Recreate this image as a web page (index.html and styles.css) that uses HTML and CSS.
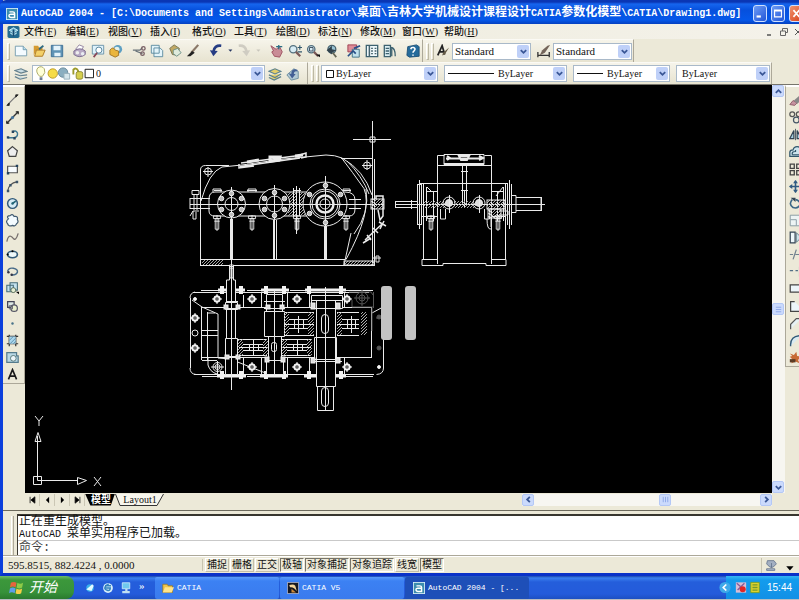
FILE: index.html
```html
<!DOCTYPE html>
<html lang="zh-CN">
<head>
<meta charset="utf-8">
<title>AutoCAD 2004</title>
<link rel="stylesheet" href="styles.css">
</head>
<body>
<svg class="defs" aria-hidden="true">
  <defs>
    <symbol id="chev" viewBox="0 0 10 10"><path d="M2 3.5 5 6.5 8 3.5" fill="none" stroke="#3a5796" stroke-width="2"/></symbol>
    <symbol id="acad" viewBox="0 0 14 14"><rect x=".5" y=".5" width="13" height="13" fill="#3c8dae" stroke="#d9f1f5"/><path d="M4 4.5h4q2 0 2 2V11H6q-2.500 0-2.500-2T6 7.200h4" fill="none" stroke="#fff" stroke-width="1.700"/></symbol>
    <symbol id="mag" viewBox="0 0 16 16"><circle cx="6" cy="6" r="4.200" fill="#d8ecf4" stroke="#54707e" stroke-width="1.500"/><path d="m9 9 5 5" stroke="#7c5a58" stroke-width="2.500"/></symbol>
    <symbol id="bolt" viewBox="0 0 8 8"><circle cx="4" cy="4" r="2.600" fill="#bbb" stroke="#fff"/></symbol>
  </defs>
</svg>

<div class="window">
  <header class="titlebar">
    <svg class="app-icon"><use href="#acad"/></svg>
    <h1><span>AutoCAD 2004 - [C:\Documents and Settings\Administrator\</span>桌面<span>\</span>吉林大学机械设计课程设计<span>CATIA</span>参数化模型<span>\CATIA\Drawing1.dwg]</span></h1>
    <div class="caption-buttons">
      <button aria-label="最小化"><svg viewBox="0 0 14 16"><path d="M3 11.500h5" stroke="#fff" stroke-width="2.500"/></svg></button>
      <button aria-label="最大化"><svg viewBox="0 0 14 16"><path d="M3 4h8v8H3zM3 5h8" fill="none" stroke="#fff" stroke-width="1.300"/></svg></button>
      <button class="close" aria-label="关闭"><svg viewBox="0 0 14 16"><path d="m4 4 7 8M11 4l-7 8" stroke="#fff" stroke-width="2"/></svg></button>
    </div>
  </header>

  <nav class="menubar">
    <svg class="menu-icon" viewBox="0 0 14 14"><rect width="14" height="14" rx="2" fill="#236b91"/><path d="m2 5 5-3 5 3-5 3zM3 8l4 3 4-3" fill="#7fc4dc" stroke="#d9f2fa"/><path d="M7 4v8" stroke="#164b72" stroke-width="2"/></svg>
    <button>文件(<u>F</u>)</button><button>编辑(<u>E</u>)</button><button>视图(<u>V</u>)</button><button>插入(<u>I</u>)</button><button>格式(<u>O</u>)</button><button>工具(<u>T</u>)</button><button>绘图(<u>D</u>)</button><button>标注(<u>N</u>)</button><button>修改(<u>M</u>)</button><button>窗口(<u>W</u>)</button><button>帮助(<u>H</u>)</button>
    <div class="doc-buttons">
      <button aria-label="最小化文档"><svg viewBox="0 0 10 10"><path d="M2 8h4" stroke="#555" stroke-width="1.500"/></svg></button>
      <button aria-label="还原文档"><svg viewBox="0 0 10 10"><path d="M3.500 4V1.500h5v4H7M1.500 4h5v4.500h-5z" fill="none" stroke="#666"/></svg></button>
      <button aria-label="关闭文档"><svg viewBox="0 0 10 10"><path d="m2 2 6 6M8 2 2 8" stroke="#555"/></svg></button>
    </div>
  </nav>

  <div class="toolrow">
    <div class="toolbar">
      <i class="grip"></i>
      <div class="group">
        <button aria-label="新建"><svg viewBox="0 0 16 16"><path d="M1.500 2.500h9l4 4v7h-13z" fill="#f4fbff" stroke="#6e98ac"/><path d="M10.500 2.500v4h4" fill="#bfe2f0" stroke="#6e98ac"/></svg></button>
        <button aria-label="打开"><svg viewBox="0 0 16 16"><path d="M2 2h5l1 2h4v3H5L2 13z" fill="#d59b32"/><path d="M5 7h10l-3 7H3z" fill="#f3d069" stroke="#a97218"/><path d="m8 6 5-4" stroke="#2f6a82" stroke-width="2"/></svg></button>
        <button aria-label="保存"><svg viewBox="0 0 16 16"><path d="M1.500 1.500h13v13h-13z" fill="#5f93b5" stroke="#376b92"/><path d="M4 2h8v5H4zM5 10h7v4H5z" fill="#e4f3fb"/></svg></button>
      </div>
      <div class="group">
        <button aria-label="打印"><svg viewBox="0 0 16 16"><path d="M3 6 7 1l5 2-3 5z" fill="#fff" stroke="#8b7b9c"/><path d="M1 8q7-5 13 0v4q-6 5-13 0z" fill="#b8a9c4" stroke="#75668a"/><circle cx="5" cy="10" r="2" fill="#eee"/><circle cx="11" cy="11" r="2" fill="#e9edf3"/></svg></button>
        <button aria-label="打印预览"><svg viewBox="0 0 16 16"><path d="M1.500 1.500h13v10h-13z" fill="#dff2fb" stroke="#648ea6"/><circle cx="9" cy="7" r="3.500" fill="#fff" stroke="#477892"/><path d="m7 10-4 5" stroke="#845" stroke-width="2"/></svg></button>
        <button aria-label="发布"><svg viewBox="0 0 16 16"><circle cx="10" cy="6" r="5" fill="#5d9fc3"/><circle cx="9" cy="6" r="3" fill="#e8f2e8"/><path d="M1 7q4-5 6 0l4 1v5l-4 2-6-3z" fill="#eab53c" stroke="#9b7023"/></svg></button>
      </div>
      <div class="group">
        <button aria-label="剪切"><svg viewBox="0 0 16 16"><path d="M1 7h8l3-3M4 8l8 3" fill="none" stroke="#687379" stroke-width="1.500"/><circle cx="13" cy="5" r="2" fill="none" stroke="#785f65" stroke-width="1.500"/><circle cx="12" cy="11" r="2" fill="none" stroke="#785f65" stroke-width="1.500"/></svg></button>
        <button aria-label="复制"><svg viewBox="0 0 16 16"><path d="M1.500 1.500h9v9h-9zM4.500 4.500h7l3 3v7h-10z" fill="#e3f4fa" stroke="#55869c"/></svg></button>
        <button aria-label="粘贴"><svg viewBox="0 0 16 16"><path d="m2 5 5-4 6 4-2 8-6-1z" fill="#c1a863" stroke="#706e4b"/><path d="m6 7 5-2 4 5-5 4-4-3z" fill="#dfebdd" stroke="#668d85"/></svg></button>
        <button aria-label="特性匹配"><svg viewBox="0 0 16 16"><path d="m14 1-8 9" stroke="#8a7868" stroke-width="2.500"/><path d="m7 8 3 2-5 4H1z" fill="#222"/></svg></button>
      </div>
      <div class="group">
        <button aria-label="放弃"><svg viewBox="0 0 16 16"><path d="M14 2Q6 1 5 9" fill="none" stroke="#253c83" stroke-width="3"/><path d="m1 7 4 7 5-6z" fill="#253c83"/></svg></button>
        <button class="drop" aria-label="放弃列表"><svg viewBox="0 0 10 16"><path d="M3 6h5L5.500 9z" fill="#243460"/></svg></button>
        <button aria-label="重做"><svg viewBox="0 0 16 16"><path d="M2 2q8-1 9 7" fill="none" stroke="#cfccc2" stroke-width="3"/><path d="m15 7-4 7-5-6z" fill="#cfccc2"/></svg></button>
        <button class="drop" aria-label="重做列表"><svg viewBox="0 0 10 16"><path d="M3 6h5L5.500 9z" fill="#c8c5bb"/></svg></button>
      </div>
      <div class="group">
        <button aria-label="平移"><svg viewBox="0 0 16 16"><path d="m1 2 6 4 4-3 3 6-3 6-6-1-3-5 2-1z" fill="#c98c96" stroke="#9a4c5b"/><path d="M10 1v5M7 3h7" stroke="#2b6f86" stroke-width="1.500"/></svg></button>
        <button aria-label="实时缩放"><svg viewBox="0 0 16 16"><use href="#mag"/><path d="M11 4h5M13.500 1.500v5M11 9h5" stroke="#34596d" stroke-width="1.300"/></svg></button>
        <button aria-label="窗口缩放"><svg viewBox="0 0 16 16"><use href="#mag"/><path d="M4 4h4v4H4z" fill="none" stroke="#345"/><path d="M11 12h5v3z" fill="#111"/></svg></button>
        <button aria-label="缩放上一个"><svg viewBox="0 0 16 16"><circle cx="9" cy="6" r="4.500" fill="#9bc4d4" stroke="#47616d" stroke-width="1.500"/><path d="m3 7 6-5v4l5 1-5 3v2z" fill="#31424d"/><path d="m10 10 4 5" stroke="#665" stroke-width="2"/></svg></button>
      </div>
      <div class="group">
        <button aria-label="特性"><svg viewBox="0 0 16 16"><path d="M1 1h10v8H1z" fill="#df8e99" stroke="#9c3749"/><path d="M6 6h8v9H6z" fill="#c3e2ed" stroke="#376a80"/><path d="m1 14 6-6 3 3M8 5l7-3" fill="none" stroke="#294f87" stroke-width="2"/></svg></button>
        <button aria-label="设计中心"><svg viewBox="0 0 16 16"><path d="M1.500 1.500h13v13h-13z" fill="#eef8fa" stroke="#3d6270" stroke-width="1.500"/><path d="M5 2v12M7 5h2M11 5h2M7 8h2M11 8h2M7 11h2M11 11h2" stroke="#45626d" stroke-width="1.700"/></svg></button>
        <button aria-label="工具选项板"><svg viewBox="0 0 16 16"><path d="M1.500 1.500h7v13h-7z" fill="#dceff3" stroke="#3d6270" stroke-width="1.500"/><path d="M3 5h4M3 8h4M3 11h4M9 4q5 0 5 10M10 5v9" fill="none" stroke="#3d6270" stroke-width="1.500"/></svg></button>
      </div>
      <button aria-label="帮助"><svg viewBox="0 0 16 16"><path d="m2 3 10-2 3 2v11l-11 1-3-2z" fill="#256b9b" stroke="#1a4e75"/><path d="M5.500 6Q6 3.500 8.500 4q3 1 1 3.500Q8 8.500 8 10M8 12v1.500" fill="none" stroke="#fff" stroke-width="1.800"/></svg></button>
    </div>
    <div class="toolbar styles">
      <i class="grip"></i><i class="grip"></i>
      <svg class="style-icon" viewBox="0 0 16 16"><path d="m2 13 5-11 3 10M4 9h5" fill="none" stroke="#222" stroke-width="2"/><path d="m15 4-5 8-3 1 1-3z" fill="#655b46"/></svg>
      <div class="combo text-style"><select aria-label="文字样式"><option>Standard</option></select><span class="arrow"><svg><use href="#chev"/></svg></span></div>
      <svg class="style-icon dim" viewBox="0 0 16 16"><path d="M1 9v6M14 9v6M1 13h13" stroke="#333" stroke-width="1.500"/><path d="m15 1-6 9-6 3 3-6 6-5z" fill="#74655a"/></svg>
      <div class="combo text-style"><select aria-label="标注样式"><option>Standard</option></select><span class="arrow"><svg><use href="#chev"/></svg></span></div>
    </div>
  </div>

  <div class="toolrow">
    <div class="toolbar">
      <i class="grip"></i>
      <button class="layer-button" aria-label="图层特性"><svg viewBox="0 0 16 16"><path d="m1 4 7-2 7 3-7 2zM1 8l6 2 8-1M1 11l6 3 8-2" fill="#c9dce3" stroke="#66818d" stroke-width="1.300"/></svg></button>
      <div class="combo layer">
        <svg class="layer-state" viewBox="0 0 64 16"><path d="M6 11Q1 6 4 2q4-3 7 1 2 4-2 8z" fill="#ffffd8" stroke="#aaa763"/><path d="M6 12h3v3H6z" fill="#6e7c94"/><circle cx="20" cy="8" r="5" fill="#f6dc48" stroke="#bb9a25"/><circle cx="31" cy="7" r="5" fill="#8aaec0" stroke="#68899b"/><path d="M32 8h6v6h-6z" fill="#d4e5eb" stroke="#99b1bc"/><path d="M42 9V4q3-3 5 1v3" fill="none" stroke="#9c9b2b" stroke-width="2"/><rect x="45" y="6" width="7" height="8" rx="2" fill="#d6cf4c" stroke="#8c8732"/><path d="M54.500 3.500h9v9h-9z" fill="#fff" stroke="#111"/></svg>
        <select aria-label="图层"><option>0</option></select><span class="arrow"><svg><use href="#chev"/></svg></span>
      </div>
      <div class="group layer-tools">
        <button aria-label="将对象的图层置为当前"><svg viewBox="0 0 16 16"><path d="m1 5 7-3 7 3-7 3zM1 9l7 3 7-4M1 12l6 3 8-4" fill="#e5cf69" stroke="#5d8290" stroke-width="1.300"/></svg></button>
        <button aria-label="上一个图层"><svg viewBox="0 0 16 16"><path d="m1 9 8-7 5 3v8l-8 2z" fill="#b2c9d4" stroke="#688b9b"/><path d="M13 3Q6 1 6 8l-3-1 4 6 4-5H9q0-4 4-3z" fill="#435f94"/></svg></button>
      </div>
    </div>
    <div class="toolbar properties">
      <i class="grip"></i><i class="grip"></i>
      <div class="combo color"><svg class="swatch" viewBox="0 0 10 10"><path d="M1.500 1.500h7v7h-7z" fill="#fff" stroke="#111"/></svg><select aria-label="颜色"><option>ByLayer</option></select><span class="arrow"><svg><use href="#chev"/></svg></span></div>
      <div class="combo linetype"><i class="line"></i><select aria-label="线型"><option>ByLayer</option></select><span class="arrow"><svg><use href="#chev"/></svg></span></div>
      <div class="combo weight"><i class="line"></i><select aria-label="线宽"><option>ByLayer</option></select><span class="arrow"><svg><use href="#chev"/></svg></span></div>
      <div class="combo plot"><select aria-label="打印样式"><option>ByLayer</option></select><span class="arrow"><svg><use href="#chev"/></svg></span></div>
    </div>
  </div>

  <main class="workspace">
    <aside class="side draw">
      <button aria-label="直线"><svg viewBox="0 0 16 16"><path d="M2 13 13 2" stroke="#777" stroke-width="1.500"/><path d="M1 14h3v-3zM15 1h-3v3z" stroke="#222" fill="#222"/></svg></button>
      <button aria-label="构造线"><svg viewBox="0 0 16 16"><path d="M1 15 15 1" stroke="#333" stroke-width="1.700"/><circle cx="8" cy="8" r="2" fill="#4777a0"/><path d="M12 1h3v3M1 12v3h3" fill="none" stroke="#222" stroke-width="1.500"/></svg></button>
      <button aria-label="多段线"><svg viewBox="0 0 16 16"><path d="M2 12h8q5-1 4-6-2-4-6-1" fill="none" stroke="#3c7893" stroke-width="1.700"/><path d="M1 10h3v3H1zM9 11h3v3H9zM7 3h3v3H7z" fill="#28445d"/></svg></button>
      <button aria-label="正多边形"><svg viewBox="0 0 16 16"><path d="m8 2 6 5-2 7H4L2 7z" fill="#eee" stroke="#444" stroke-width="1.500"/></svg></button>
      <button aria-label="矩形"><svg viewBox="0 0 16 16"><path d="M2 4h12v8H2z" fill="#f8fcff" stroke="#555" stroke-width="1.500"/><path d="M1 11h3v3H1zM12 2h3v3h-3z" fill="#24425d"/></svg></button>
      <button aria-label="圆弧"><svg viewBox="0 0 16 16"><path d="M2 14Q3 4 14 2" fill="none" stroke="#555" stroke-width="1.500"/><path d="M1 12h3v3H1zM12 1h3v3h-3zM4 5h3v3H4z" fill="#3a5368"/></svg></button>
      <button aria-label="圆"><svg viewBox="0 0 16 16"><circle cx="8" cy="8" r="6" fill="#d7ecf5" stroke="#315a79" stroke-width="1.800"/><path d="m8 8 4-3" stroke="#267" stroke-width="2"/><circle cx="8" cy="8" r="1.500" fill="#267"/></svg></button>
      <button aria-label="修订云线"><svg viewBox="0 0 16 16"><path d="M3 6Q0 2 5 2q3-3 5 1 5-1 4 4 2 3-1 5-2 4-5 2-5 2-6-2-3-3 1-6z" fill="#f3fbff" stroke="#415b71" stroke-width="1.500"/></svg></button>
      <button aria-label="样条曲线"><svg viewBox="0 0 16 16"><path d="M1 13Q3 3 8 8q4 6 7-5" fill="none" stroke="#766f6d" stroke-width="1.600"/></svg></button>
      <button aria-label="椭圆"><svg viewBox="0 0 16 16"><ellipse cx="8" cy="8" rx="6" ry="4" fill="#eef8fa" stroke="#315a79" stroke-width="2"/><circle cx="8" cy="4" r="1.300"/><circle cx="2" cy="8" r="1.300"/></svg></button>
      <button aria-label="椭圆弧"><svg viewBox="0 0 16 16"><path d="M2 8q1-5 7-4 6 1 5 5-2 4-8 3" fill="none" stroke="#486b89" stroke-width="1.800"/><circle cx="3" cy="9" r="1.500" fill="#334"/><circle cx="7" cy="12" r="1.500" fill="#334"/></svg></button>
      <button aria-label="插入块"><svg viewBox="0 0 16 16"><path d="M1 4h8v8H1zM5 1h9v9H5z" fill="#c5e2ee" stroke="#456b78" stroke-width="1.300"/><circle cx="9" cy="10" r="3" fill="#e6efd5" stroke="#465d47"/><path d="M12 12h4v3z"/></svg></button>
      <button aria-label="创建块"><svg viewBox="0 0 16 16"><path d="M2 2h8v7H2z" fill="#dce8e4" stroke="#445" stroke-width="1.500"/><circle cx="10" cy="10" r="4" fill="#e9efce" stroke="#556" stroke-width="1.500"/><path d="M4 7h4v4H4z" fill="none" stroke="#556"/></svg></button>
      <button aria-label="点"><svg viewBox="0 0 16 16"><circle cx="8" cy="8" r="1.500" fill="#48738a"/></svg></button>
      <button aria-label="图案填充"><svg viewBox="0 0 16 16"><path d="M1 3h14M1 12h14M4 1v14M12 1v14" stroke="#333" stroke-width="1.500"/><path d="M4 3h8v9H4z" fill="#a9d6ec"/><path d="m4 8 5-5M5 12l7-7M9 12l3-3" stroke="#5288a8"/></svg></button>
      <button aria-label="面域"><svg viewBox="0 0 16 16"><path d="M1 2h12v4h2v8H1z" fill="#b9d8e5" stroke="#557b8c" stroke-width="1.500"/><circle cx="9" cy="9" r="3.500" fill="#ecf6fa" stroke="#466"/></svg></button>
      <button aria-label="多行文字"><svg viewBox="0 0 16 16"><path d="m3 14 5-12 5 12M5 10h6" fill="none" stroke="#1b1b1b" stroke-width="2"/></svg></button>
    </aside>

    <section class="canvas">
      <svg class="drawing" viewBox="25 85 747 409" aria-label="减速器装配图">
        <defs>
          <pattern id="hatch" width="3" height="3" patternUnits="userSpaceOnUse"><path d="m0 3 3-3" stroke="#aaa" stroke-width="1"/></pattern>
          <symbol id="stud" viewBox="0 0 10 18"><path d="M1 1h8v3H1zM3 4h4v12H3zM5 0v18M2 7h6" fill="none" stroke="#eee"/></symbol>
          <symbol id="cross" viewBox="0 0 10 10"><circle cx="5" cy="5" r="3.300" fill="#ddd" stroke="#fff"/><path d="M0 5h10M5 0v10" stroke="#fff"/><path d="M3 5h4M5 3v4" stroke="#333"/></symbol>
        </defs>

        <g class="cad front">
          <path d="M200.500 265.500V170q0-4.500 5-4.500H229M201 259.500h144M200 265.500h175M372.500 159v106M374.500 159v106M341 158.500h32M201 201q8-29 21-34l20-2M242 165l42-6 42-4q9 0 16 3 22 12 30 37M342 158.500q10 13 22 30 9 22-18 71M366 189q4 24-12 45M344 265l7-32M347 161q15 15 22 33"/>
          <path d="M190 204.500h193M190 198.500h20M190 208.500h20M190 198v11M349 199.500h12M349 208.500h12M209 211v-12q0-7 6-7h130q10 0 10 8v9q0 7-6 7H215q-6 0-6-5z"/>
          <path d="M240 166.500 300 158M241 163l62-8M239 164v4l15-2M300 155l6-2v4l-5 1" stroke-width="1.500"/>
          <path d="m247 162 12-2M270 157h10l-1 3-9 1zM295 156l8-1" stroke-width="3"/>
          <circle cx="208" cy="171.500" r="3.500"/><path d="M203 171.500h10M208 167v10M362 165.500h10M367 160v10"/><circle cx="367" cy="165.500" r="3.500"/>
          <path d="M231.500 187v80M274.500 187v73M325.500 176v84"/>
          <path d="M230.500 219v41M232.500 219v41M273.500 220v40M276.500 220v40M324.500 226v34M326.500 226v34"/>
          <path d="M214 190.500h8M247 190.500h10M293 190.500h8M342 190.500h9M192 190.500h7v4h-7zM194 195v15M197 195v15M190 216l3-5h6M193 211v8h3v-7"/>
          <path d="M213 192v-3h8v3M248 192v-3h8v3M343 192v-3h7v3"/>
          <rect x="288" y="192" width="8" height="24" fill="url(#hatch)" stroke="none"/><rect x="299" y="192" width="6" height="24" fill="url(#hatch)" stroke="none"/>
          <path d="M293.500 188v28M299.500 188v28M296.500 186v48"/>
          <use href="#stud" x="212" y="215" width="10" height="16"/><use href="#stud" x="247" y="215" width="10" height="16"/><use href="#stud" x="292" y="215" width="10" height="16"/><use href="#stud" x="341" y="215" width="10" height="16"/>
          <g fill="#000"><circle cx="231.500" cy="204" r="14"/><circle cx="231.500" cy="204" r="6.500"/><circle cx="274.500" cy="204" r="15.500"/><circle cx="274.500" cy="204" r="8"/><circle cx="325" cy="204" r="22"/><circle cx="325" cy="204" r="15"/><circle cx="325" cy="204" r="13"/></g>
          <circle cx="325" cy="204" r="8.500" stroke-width="2.500"/><circle cx="325" cy="204" r="5"/>
          <path d="M214 204.500h147M231.500 187v34M274.500 185v38M325.500 176v54"/>
          <g class="bolts"><use href="#bolt" x="228" y="190" width="7" height="7"/><use href="#bolt" x="228" y="211" width="7" height="7"/><use href="#bolt" x="218" y="195" width="7" height="7"/><use href="#bolt" x="238" y="195" width="7" height="7"/><use href="#bolt" x="218" y="206" width="7" height="7"/><use href="#bolt" x="238" y="206" width="7" height="7"/>
          <use href="#bolt" x="271" y="189" width="7" height="7"/><use href="#bolt" x="271" y="212" width="7" height="7"/><use href="#bolt" x="261" y="195" width="7" height="7"/><use href="#bolt" x="281" y="195" width="7" height="7"/><use href="#bolt" x="261" y="206" width="7" height="7"/><use href="#bolt" x="281" y="206" width="7" height="7"/>
          <use href="#bolt" x="322" y="182" width="7" height="7"/><use href="#bolt" x="322" y="219" width="7" height="7"/><use href="#bolt" x="306" y="191" width="7" height="7"/><use href="#bolt" x="337" y="191" width="7" height="7"/><use href="#bolt" x="306" y="210" width="7" height="7"/><use href="#bolt" x="337" y="210" width="7" height="7"/></g>
          <rect x="371" y="199" width="13" height="10" fill="url(#hatch)"/><path d="M376 199v-3h7v20l-3 4-2-10M363 243l8-5M365 240l17-16M367 235l4 5M373 228l5 5M379 222l7 4M380 229l4-8" stroke-width="1.500"/>
          <path d="M376 256h3v6h-3zM372 258h9"/>
          <rect x="202" y="260" width="21" height="5" fill="url(#hatch)" stroke="none"/><rect x="344" y="261" width="30" height="4" fill="url(#hatch)"/>
        </g>

        <g class="cad side-view">
          <path d="M437.500 264V155.500h7M491.500 264V155.500h-7M444 154.500h40v10h-40zM444 163.500h40M438 165.500h53M420 183.500h88M423.500 184v75M505.500 184v75M422.500 259.500h15M492 259.500h14M422 265.500v-6h15M506 259.500v6h-20v-2h-43v2h-21"/>
          <path d="M447 156l3 2-3 2M479 156l4 2-4 2M459 156h10l-2 4h-6zM446 158.500h36" stroke-width="2"/>
          <path d="M462.500 165v40M466.500 165v40M461 171.500h7M461 190.500h7M464.500 190v17"/>
          <path d="M395 204.500h150M395 201.500h22M395 207.500h22M395.500 201v7M411.500 200v9M417.500 184v41M421.500 184v41M419.500 180v49M417 184.500h5M417 224.500h5M507.500 184v41M511.500 184v41M509.500 180v49M512 195.500h4v17h-4M516 197.500h25v13h-25M541.500 197v14"/>
          <path d="M426 191.500h11M492 191.500h12M426.500 187v34M433.500 192v29M422 216.500h16M497.500 192v29M503.500 187v34M492 216.500h14M431 191l-4-4M503 187l-7 9"/>
          <rect x="424" y="201" width="22" height="7" fill="url(#hatch)" stroke="none"/><rect x="454" y="201" width="22" height="7" fill="url(#hatch)" stroke="none"/><rect x="487" y="200" width="18" height="9" fill="url(#hatch)"/>
          <circle cx="449" cy="203" r="6"/><circle cx="449" cy="203" r="3.500" fill="#ddd"/><circle cx="479" cy="203" r="6"/><circle cx="479" cy="203" r="3.500" fill="#ddd"/>
          <path d="M440.500 209v10h5v-10M484.500 209v10h5v-10M449.500 195v18M479.500 195v18"/>
          <rect x="488" y="209" width="13" height="9" fill="url(#hatch)"/><path d="M487 219q0 11 4 10M491 210v17M499 215h9v-4h-9"/>
          <use href="#stud" x="426" y="215" width="10" height="16"/><use href="#stud" x="493" y="215" width="10" height="16"/>
        </g>

        <g class="cad plan">
          <path d="M194 292.500h175M194 374.500h180M190.500 298v70M190 298q0-5 5-6M190 368q0 6 6 6.500M383.500 307v61q0 6-7 6.500M383 307l-11 6M201 307.500h171M201 357.500h170M201.500 307v53M371.500 307v51M192 300l10 7 16 7v44l12 1 43 17M207.500 312v48M202 330.500h16M202 335.500h16M215 313h-8M202 360.500h15"/>
          <path d="M201 290.500h17M247 290.500h17M290 290.500h15M346 290.500h27M202 376.500h15M247 376.500h13M346 376.500h27M243.500 295v12M261.500 293v14M287.500 293v14M309.500 293v14M344.500 293v14M243.500 357v17M261.500 357v17M287.500 357v17M309.500 357v17M344.500 357v17"/>
          <g class="bolts"><path d="M218 290h27M261 290h28M305 290h41M217 376h29M260 376h28M304 376h42" stroke-width="3"/><path d="M222 286v8M241 286v8M266 286v8M284 286v8M309 286v8M341 286v8M222 371v8M241 371v8M266 371v8M284 371v8M309 371v8M341 371v8" stroke-width="4"/></g>
          <g fill="#000"><path d="M229.500 265h4v15h2v63h-2v29h-5v-29h-2v-63h3z"/><path d="M225.500 338.500h12v18h-12zM225.500 302.500h12v7h-12zM225.500 357.500h12v17h-12z"/>
          <path d="M266.500 294.500h16v17h-16zM264.500 311.500h20v25h-20zM268.500 336.500h13v24h-13zM266.500 360.500h17v14h-17z"/>
          <path d="M311.500 295.500h31v13h-31zM316.500 300.500h19v86h-19zM314.500 337.500h22v22h-22zM317.500 386.500h16v24h-16z"/></g>
          <path d="M231.500 263v127M274.500 290v86M325.500 287v124M229 266.500h5M226 301.500h12M226 308.500h12M264 301.500h21M264 308.500h21M311 300.500h31M311 308.500h31M265 360.500h20M311 361.500h31"/>
          <g class="bolts"><rect x="224" y="305" width="4" height="4"/><rect x="236" y="305" width="4" height="4"/><rect x="266" y="305" width="4" height="4"/><rect x="280" y="305" width="4" height="4"/><rect x="311" y="303" width="4" height="6"/><rect x="336" y="303" width="4" height="6"/><rect x="225" y="355" width="4" height="4"/><rect x="236" y="355" width="4" height="4"/><rect x="265" y="357" width="4" height="5"/><rect x="281" y="357" width="4" height="5"/><rect x="311" y="358" width="4" height="5"/><rect x="336" y="358" width="4" height="5"/></g>
          <path d="M284 312.500h30M284 335.500h30M337 312.500h22M337 335.500h22M238 339.500h29M238 355.500h29M282 339.500h29M282 355.500h29"/>
          <g fill="url(#hatch)" stroke="none"><path d="M284 312h5v23h-5zM308 312h6v23h-6zM337 312h5v23h-5zM238 339h5v17h-5zM263 339h5v17h-5zM282 339h5v17h-5zM307 339h5v17h-5zM361 312h6v23h-6z"/></g>
          <path d="M289 319.500h19M289 328.500h19M294.500 320v9M303.500 320v9M298.500 316v17M342 319.500h17M342 328.500h17M347.500 320v9M355.500 320v9M351.500 316v17M243 344.500h20M243 350.500h20M249.500 345v6M258.500 345v6M253.500 340v15M287 344.500h20M287 350.500h20M293.500 345v6M302.500 345v6M297.500 340v15M284 324.500h30M337 324.500h22M239 347.500h28M283 347.500h28"/>
          <rect x="321.500" y="314.500" width="7" height="19" rx="3.500"/><rect x="271.500" y="342.500" width="5" height="9" rx="2"/><rect x="321.500" y="387.500" width="7" height="19" rx="3.500"/><path d="M230 268h3v10h-3z"/>
          <circle cx="217.500" cy="367" r="4.500"/><circle cx="217.500" cy="367" r="2.500"/><path d="M211 367h13M217.500 361v13M208 358v7q2 7 9 9"/>
          <circle cx="195" cy="333" r="3"/><circle cx="195" cy="299" r="1.500" fill="#fff"/><circle cx="379" cy="367" r="1.500" fill="#fff"/>
          <use href="#cross" x="212" y="294" width="10" height="10"/><use href="#cross" x="247" y="294" width="10" height="10"/><use href="#cross" x="292" y="294" width="10" height="10"/><use href="#cross" x="342" y="294" width="10" height="10"/><use href="#cross" x="190" y="313" width="10" height="10"/><use href="#cross" x="190" y="343" width="10" height="10"/><use href="#cross" x="247" y="362" width="10" height="10"/><use href="#cross" x="292" y="362" width="10" height="10"/><use href="#cross" x="342" y="362" width="10" height="10"/>
          <g stroke="#555"><circle cx="362" cy="298" r="6"/><circle cx="362" cy="298" r="3"/><path d="M354 298h16M362 290v16M373.500 292v16M349 292h22l2 3M352 300v7h21M372 308v23M376 318h6"/><circle cx="379" cy="348" r="2" fill="#555"/><circle cx="379" cy="317" r="2" fill="#555"/></g>
        </g>

        <g class="cad cursor"><path d="M353 139.500h38M372.500 121v37M370 137h5v5h-5z"/></g>
        <g class="cad ucs"><path d="M33.500 476.500h8v8h-8zM37.500 480.500V442M37.500 480.500H78M35 441.500h6l-3-9zM37.500 442v-6M77.500 477.500v7l9-4zM35 416l4 5v5M43 416l-4 5M94 477l7 9M101 477l-7 9"/></g>
        <g fill="#c3c3c3"><rect x="381" y="286" width="11" height="54" rx="3"/><rect x="405" y="286" width="11" height="54" rx="3"/></g>
      </svg>
    </section>

    <div class="vscroll">
      <button aria-label="向上滚动"><svg viewBox="0 0 10 10"><path d="m2 6.500 3-3 3 3" fill="none" stroke="#3a5796" stroke-width="2"/></svg></button>
      <button class="thumb" aria-label="垂直滑块"><svg viewBox="0 0 10 10"><path d="M2 2.500h6M2 5h6M2 7.500h6" stroke="#8ba6e6"/></svg></button>
      <button aria-label="向下滚动"><svg><use href="#chev"/></svg></button>
    </div>

    <div class="tabs">
      <div class="tab-nav">
        <button aria-label="第一个"><svg viewBox="0 0 10 10"><path d="M2 1v8M8 1v8L3 5z" stroke="#111" stroke-width="1"/></svg></button><button aria-label="上一个"><svg viewBox="0 0 10 10"><path d="M7 1v8L3 5z"/></svg></button><button aria-label="下一个"><svg viewBox="0 0 10 10"><path d="M3 1v8l4-4z"/></svg></button><button aria-label="最后一个"><svg viewBox="0 0 10 10"><path d="M8 1v8M2 1v8l5-4z" stroke="#111"/></svg></button>
      </div>
      <button class="tab active">模型</button>
      <button class="tab layout"><svg viewBox="0 0 50 12" preserveAspectRatio="none"><path d="M.500 0 5 11.500h37L48.500 0" fill="#f8f6ed" stroke="#333"/></svg><span>Layout1</span></button>
      <div class="hscroll">
        <button aria-label="向左滚动"><svg viewBox="0 0 10 10"><path d="m6.500 2-3 3 3 3" fill="none" stroke="#3a5796" stroke-width="2"/></svg></button>
        <button class="hthumb" aria-label="水平滑块"><svg viewBox="0 0 10 10"><path d="M2.500 2v6M5 2v6M7.500 2v6" stroke="#8ba6e6"/></svg></button>
        <button aria-label="向右滚动"><svg viewBox="0 0 10 10"><path d="m3.500 2 3 3-3 3" fill="none" stroke="#3a5796" stroke-width="2"/></svg></button>
      </div>
    </div>

    <aside class="side modify">
      <button aria-label="删除"><svg viewBox="0 0 16 16"><path d="m1 13 4-5 5 3-3 3z" fill="#c693a0" stroke="#82505e"/><path d="m6 8 8-7v8l-4 3z" fill="#888"/></svg></button>
      <button aria-label="复制对象"><svg viewBox="0 0 16 16"><circle cx="4" cy="4" r="3" fill="none" stroke="#555" stroke-width="1.500"/><circle cx="9" cy="11" r="3.500" fill="none" stroke="#456" stroke-width="1.500"/><circle cx="12" cy="4" r="3" fill="none" stroke="#555" stroke-width="1.500"/></svg></button>
      <button aria-label="镜像"><svg viewBox="0 0 16 16"><path d="M6 3v10H1zM10 3v10h5z" fill="#a8cfe0" stroke="#345" stroke-width="1.500"/><path d="M8 1v14" stroke="#345"/></svg></button>
      <button aria-label="偏移"><svg viewBox="0 0 16 16"><path d="M1 14V9q0-3 4-3 1-4 5-4 5 0 5 7v5zM4 12v-2q0-2 4-2V6M4 12h11" fill="#cce4ed" stroke="#31566c" stroke-width="1.500"/></svg></button>
      <button aria-label="阵列"><svg viewBox="0 0 16 16"><path d="M1.500 1.500h5v5h-5zM9.500 1.500h5v5h-5zM1.500 9.500h5v5h-5zM9.500 9.500h5v5h-5z" fill="none" stroke="#444" stroke-width="1.600"/></svg></button>
      <button aria-label="移动"><svg viewBox="0 0 16 16"><path d="M8 1v14M1 8h14" stroke="#315b82" stroke-width="2"/><path d="m8 0 3 4H5zM8 16l3-4H5zM0 8l4-3v6z" fill="#315b82"/></svg></button>
      <button aria-label="旋转"><svg viewBox="0 0 16 16"><path d="M4 3q-5 6 1 10 6 2 9-4-1-5-6-6" fill="none" stroke="#3b6687" stroke-width="2"/><path d="M2 1h6v5z" fill="#345"/></svg></button>
      <button aria-label="缩放"><svg viewBox="0 0 16 16"><path d="M1.500 1.500h13v13h-13zM2 7h7v7" fill="#edf4f4" stroke="#778e97"/></svg></button>
      <button aria-label="拉伸"><svg viewBox="0 0 16 16"><path d="M1.500 1.500h6v13h-6z" fill="#eef7fa" stroke="#345" stroke-width="1.500"/><path d="M9 2l6 6-6 6z" fill="#cce1e8" stroke="#56717f"/></svg></button>
      <button aria-label="修剪"><svg viewBox="0 0 16 16"><path d="M1 8h4M8 8h7M9 2 5 14" stroke="#71808e" stroke-width="1.500"/></svg></button>
      <button aria-label="延伸"><svg viewBox="0 0 16 16"><path d="M1 7h4M8 7h3M13 2v12" stroke="#537086" stroke-width="1.500"/></svg></button>
      <button aria-label="打断于点"><svg viewBox="0 0 16 16"><path d="M1.500 3.500h13v9h-13z" fill="#edf6fa" stroke="#444" stroke-width="1.500"/></svg></button>
      <button aria-label="打断"><svg viewBox="0 0 16 16"><path d="M7 2H2v12h12V9" fill="#edf6fa" stroke="#444" stroke-width="1.500"/></svg></button>
      <button aria-label="倒角"><svg viewBox="0 0 16 16"><path d="M2 15V9l7-7h6" fill="#e7f1f4" stroke="#555" stroke-width="1.500"/></svg></button>
      <button aria-label="圆角"><svg viewBox="0 0 16 16"><path d="M2 15Q1 2 15 2" fill="#d9eaf1" stroke="#315a79" stroke-width="1.700"/></svg></button>
      <button aria-label="分解"><svg viewBox="0 0 16 16"><path d="m1 3 5 2 3-4 1 5 5 1-4 4 2 4-5-2-5 2 1-5-3-3 3-1z" fill="#c76a36"/><path d="M1 10h7v4H1z" fill="#5c3c25"/></svg></button>
    </aside>
  </main>

  <section class="command">
    <i class="command-grip"></i>
    <div class="console">
      <p>正在重生成模型。</p>
      <p><span>AutoCAD </span>菜单实用程序已加载。</p>
      <div class="prompt"><label for="cmd">命令:</label><input id="cmd" type="text"></div>
    </div>
  </section>

  <footer class="statusbar">
    <output>595.8515, 882.4224 , 0.0000</output>
    <button>捕捉</button><button>栅格</button><button>正交</button><button class="on">极轴</button><button class="on">对象捕捉</button><button class="on">对象追踪</button><button>线宽</button><button class="on">模型</button>
    <div class="comm"><svg viewBox="0 0 16 16"><path d="M3 2h8l3 4-4 4H6L2 6z" fill="#a3afc2" stroke="#61718b"/><path d="M8 5v6M2 12h10v2H2z" stroke="#61718b" fill="#b4bfce"/></svg><svg viewBox="0 0 16 16"><path d="M4 9h9l-4.500 5z"/></svg></div>
  </footer>
</div>

<div class="taskbar">
  <button class="start"><svg viewBox="0 0 16 16"><path d="M2 3q3-2 6 0L7 8Q4 6 1 8z" fill="#e7643d"/><path d="M9 3q3 2 6 0l-1 5q-3 2-6 0z" fill="#8ecb48"/><path d="M1 9q3-2 6 0l-1 5q-3-2-6 0z" fill="#5e9eea"/><path d="M8 9q3 2 6 0l-1 5q-3 2-6 0z" fill="#f5cf46"/></svg>开始</button>
  <div class="quick">
    <button aria-label="浏览器"><svg viewBox="0 0 16 16"><circle cx="8" cy="8" r="5" fill="#39b0ed"/><path d="m3 10 8-7 2 2-3 7z" fill="#e4fbff"/></svg></button>
    <button aria-label="资源管理器"><svg viewBox="0 0 16 16"><circle cx="8" cy="8" r="6.500" fill="#d7effb"/><path d="M4 5h8M5 8h6q0 4-4 3-4-1-3-4 1-3 5-4" fill="none" stroke="#3482bd" stroke-width="2"/></svg></button>
    <button aria-label="显示桌面"><svg viewBox="0 0 16 16"><path d="M3 1h10v8H3z" fill="#6fc8ed" stroke="#d8f3ff"/><path d="M7 9h3v3H7zM3 12h10v3H3z" fill="#bedff2"/></svg></button>
    <span>»</span>
  </div>
  <div class="tasks">
    <button><svg viewBox="0 0 16 16"><path d="M1 3h6l1 2h6v9H1z" fill="#efc64c" stroke="#8e732e"/><path d="M4 7h12l-3 7H1z" fill="#ffe58b"/></svg>CATIA</button>
    <button><svg viewBox="0 0 16 16"><path d="M.500.500h15v15H.500z" fill="#171820" stroke="#ccd"/><path d="M3 4q6-2 8 1l2 7q-4-6-9-5z" fill="#f4d59b"/><path d="m6 9 6 5H6z" fill="#d08b38"/></svg>CATIA V5</button>
    <button class="current"><svg><use href="#acad"/></svg>AutoCAD 2004 - [...</button>
  </div>
  <div class="tray">
    <button class="expand" aria-label="显示隐藏图标"><svg viewBox="0 0 14 14"><circle cx="7" cy="7" r="6.500" fill="#3fa9e9"/><path d="M8.500 3.500 5 7l3.500 3.500" fill="none" stroke="#fff" stroke-width="2"/></svg></button>
    <svg viewBox="0 0 14 14"><path d="M1 1h12v12H1z" fill="#d9bdd4"/><path d="m2 2 9 8M11 2 3 10" stroke="#855c9b" stroke-width="1.500"/><circle cx="9" cy="9" r="3.500" fill="#e22525"/></svg>
    <svg viewBox="0 0 14 14"><path d="M2 1h10v12H2z" fill="#dfd32b" stroke="#779d20"/><path d="M4 4h6M4 7h6M4 10h6" stroke="#74982c" stroke-width="1.500"/></svg>
    <time>15:44</time>
  </div>
</div>
</body>
</html>
```
FILE: styles.css
```css
:root {
  --face: #ece9d8;
  --edge: #aca899;
  --xp-blue: #0a32c8;
  --serif: "Liberation Serif", "Noto Sans CJK SC", serif;
  --mono: "Liberation Mono", "Noto Sans CJK SC", monospace;
}

* { box-sizing: border-box; }

body {
  margin: 0;
  height: 100vh;
  display: flex;
  flex-direction: column;
  overflow: hidden;
  font-family: var(--serif);
  font-size: 10px;
  line-height: 12px;
  color: #111;
  background: #0a246a;
}

button, select, input {
  margin: 0;
  padding: 0;
  border: 0;
  border-radius: 0;
  background: none;
  font: inherit;
  color: inherit;
}

button { display: flex; align-items: center; justify-content: center; flex: none; }
svg { display: block; flex: none; }
.defs { position: absolute; width: 0; height: 0; }

.window {
  flex: 1;
  min-height: 0;
  display: flex;
  flex-direction: column;
  border-left: 3px solid #0b3fdc;
  border-bottom: 3px solid var(--xp-blue);
  background: var(--face);
}

/* Title bar */
.titlebar {
  flex: 0 0 24px;
  display: flex;
  align-items: center;
  margin-left: -3px;
  padding: 3px 0 0 6px;
  border-radius: 6px 0 0 0;
  background: linear-gradient(#0a36b4 0, #0a36b4 2px, #1665ee 4px, #0650dd 10px, #0558ea 20px, #0540c0 24px);
  overflow: hidden;
}
.app-icon { width: 12px; height: 14px; }
.titlebar h1 {
  flex: 1;
  min-width: 0;
  margin: 0 0 0 3px;
  overflow: hidden;
  white-space: pre;
  font-family: var(--mono);
  font-size: 12px;
  line-height: 18px;
  color: #fff;
}
.titlebar h1 span { font-size: 10px; }
.caption-buttons { display: flex; gap: 4px; margin-right: -4px; }
.caption-buttons button {
  width: 14px;
  height: 17px;
  border: 1px solid #cfe0ff;
  border-radius: 3px;
  background: linear-gradient(135deg, #6d9bf5, #2156d8);
}
.caption-buttons svg { width: 12px; height: 15px; }
.caption-buttons .close { background: linear-gradient(135deg, #f0936f, #d9431c); }

/* Menu bar */
.menubar {
  flex: 0 0 15px;
  display: flex;
  align-items: center;
  padding-left: 4px;
  background: linear-gradient(90deg, #ece9d8, #f4f2ea);
}
.menu-icon { width: 13px; height: 12px; margin-right: 4px; }
.menubar > button { width: 42px; justify-content: flex-start; white-space: nowrap; font-weight: 500; }
.doc-buttons { display: flex; gap: 4px; margin: 0 -4px 0 auto; }
.doc-buttons svg { width: 10px; height: 10px; }

/* Toolbars */
.toolrow { flex: 0 0 23px; display: flex; }
.toolrow + .toolrow { border-bottom: 1px solid #77756c; }
.toolbar {
  display: flex;
  align-items: center;
  padding-left: 4px;
  border-top: 1px solid #fbfaf5;
  border-right: 1px solid var(--edge);
  background: linear-gradient(#f6f4ea, #e7e3d0);
}
.grip { width: 3px; height: 17px; margin-right: 2px; border: 1px solid; border-color: #fff #bcb8a4 #bcb8a4 #fff; }
.toolbar button { width: 18px; height: 18px; }
.toolbar button svg, .style-icon { width: 14px; height: 14px; }
.toolbar button.drop { width: 10px; }
.toolbar button.drop svg { width: 8px; }
.group { display: flex; margin-right: 5px; }
.styles { padding-left: 3px; padding-right: 1px; }
.style-icon { margin-right: 2px; }
.style-icon.dim { margin-left: 6px; }

.combo {
  display: flex;
  align-items: center;
  height: 17px;
  padding: 1px;
  border: 1px solid #a9b9c9;
  background: #fff;
}
.combo select { flex: 1; min-width: 0; appearance: none; height: 13px; }
.combo .arrow { flex: 0 0 12px; height: 13px; display: grid; place-items: center; background: #bfd0f8; border-radius: 2px; }
.combo .arrow svg { width: 9px; height: 9px; }
.text-style { width: 79px; font-size: 11px; }
.text-style select { padding-left: 1px; }
.layer-button { margin-right: 2px; }
.layer { width: 233px; }
.layer-state { width: 60px; height: 15px; }
.layer select { padding-left: 2px; }
.layer-tools { margin-left: 1px; }
.properties { padding-left: 3px; padding-right: 1px; }
.swatch { width: 10px; height: 10px; margin: 0 1px 0 2px; }
.color { width: 117px; margin-right: 6px; }
.linetype { width: 123px; margin-right: 6px; }
.weight { width: 97px; margin-right: 6px; }
.plot { width: 94px; }
.plot select { padding-left: 4px; }
.line { height: 1px; background: #111; margin: 0 4px 0 2px; }
.linetype .line { width: 46px; }
.weight .line { width: 26px; }

/* Workspace */
.workspace {
  flex: 1;
  min-height: 0;
  display: grid;
  grid-template-columns: 22px 1fr 13px 14px;
  grid-template-rows: 1fr 13px;
  padding-bottom: 4px;
}
.side { grid-row: 1 / 3; display: flex; flex-direction: column; justify-content: space-between; overflow: hidden; }
.side svg { width: 13px; height: 13px; }
.side button { height: 17px; width: 18px; }
.draw { height: 299px; padding-top: 5px; border-top: 2px solid #fff; border-right: 1px solid var(--edge); border-bottom: 1px solid var(--edge); }
.modify { grid-column: 4; height: 282px; padding-top: 5px; border-left: 1px solid var(--edge); border-top: 2px solid #fff; border-bottom: 1px solid var(--edge); }
.canvas { grid-column: 2; grid-row: 1; overflow: hidden; background: #000; }
.drawing { width: 747px; height: 409px; }
.cad { fill: none; stroke: #eaeaea; stroke-width: 1; }
.bolts { stroke: #f2f2f2; fill: #ddd; }

.vscroll {
  grid-column: 3;
  grid-row: 1;
  display: flex;
  flex-direction: column;
  justify-content: space-between;
  background: #f7f6f1;
}
.vscroll button, .hscroll button {
  width: 12px;
  height: 12px;
  border: 1px solid #b4c8f6;
  border-radius: 2px;
  background: #cbdafc;
}
.vscroll svg, .hscroll svg { width: 9px; height: 9px; }
.vscroll .thumb { margin-top: 40px; }

.tabs { grid-column: 2 / 4; grid-row: 2; display: flex; align-items: center; }
.tab-nav { display: flex; }
.tab-nav button { width: 15px; height: 12px; border-right: 1px solid #cbc7b5; }
.tab-nav svg { width: 9px; height: 8px; }
.tab { height: 12px; font-size: 10px; }
.tab.active { padding: 0 4px 0 6px; color: #fff; font-weight: 700; background: #000; clip-path: polygon(0 0, 100% 0, 86% 100%, 18% 100%); }
.layout { display: grid; width: 50px; }
.layout svg, .layout span { grid-area: 1 / 1; }
.layout svg { width: 50px; height: 12px; }
.hscroll { width: 250px; margin: 0 13px 0 auto; display: flex; justify-content: space-between; background: #f7f6f1; }
.hscroll .hthumb { margin-left: 36px; }

/* Command window */
.command {
  flex: 0 0 45px;
  display: flex;
  padding-top: 3px;
  padding-left: 8px;
  border-top: 1px solid #6d6a5d;
  border-bottom: 1px solid var(--edge);
}
.command-grip { width: 3px; margin: 2px 3px 0 0; border-right: 1px solid var(--edge); border-left: 1px solid #fff; }
.console {
  flex: 1;
  border-top: 2px solid #38362f;
  border-left: 1px solid #38362f;
  background: #fff;
  font-family: var(--mono);
  font-size: 12px;
  line-height: 12px;
}
.console p { margin: 0; height: 12px; padding-left: 1px; white-space: pre; }
.console p span { font-size: 10px; }
.prompt { display: flex; padding: 0 1px; border-top: 1px solid #c9c9c9; color: #444; }
.prompt label { line-height: 14px; }
.prompt input { flex: 1; min-width: 0; height: 13px; outline: 0; }

/* Status bar */
.statusbar { flex: 0 0 17px; display: flex; align-items: center; padding-left: 5px; border-top: 1px solid #fff; }
.statusbar output { width: 195px; font-size: 11px; border-right: 1px solid #c8c4b0; white-space: pre; }
.statusbar button { height: 14px; margin-left: 1px; padding: 0 1px; border: 1px solid; border-color: #fff #c2bea9 #c2bea9 #fff; }
.statusbar output + button { margin-left: 2px; }
.statusbar .on { border-color: #77746a #fff #fff #77746a; }
.comm { display: flex; gap: 5px; margin-left: auto; padding: 1px 3px; border-left: 1px solid #c8c4b0; }
.comm svg { width: 13px; height: 13px; }

/* Taskbar */
.taskbar {
  flex: 0 0 24px;
  display: flex;
  border-bottom: 1px solid #b9bcc2;
  background: linear-gradient(#1c48ae 0, #3a80f0 2px, #245edb 6px, #245bdb 18px, #1d4fc2 100%);
  font-size: 11px;
  color: #fff;
}
.start {
  width: 74px;
  padding-right: 8px;
  gap: 5px;
  border-radius: 0 8px 8px 0;
  background: linear-gradient(#6dbb68 0, #3c983b 4px, #37923a 16px, #2a7a2e 100%);
  font-size: 14px;
  font-style: italic;
}
.start svg { width: 15px; height: 15px; }
.quick { display: flex; align-items: center; padding-left: 7px; width: 81px; }
.quick button { width: 18px; }
.quick svg { width: 12px; height: 12px; }
.quick span { margin: -6px 0 0 4px; }
.tasks { flex: 1; min-width: 0; display: flex; gap: 1px; padding-top: 1px; }
.tasks button {
  flex: 0 1 124px;
  min-width: 0;
  justify-content: flex-start;
  gap: 3px;
  padding-left: 7px;
  border-radius: 2px;
  background: linear-gradient(#5a9bfb, #3c81f3 4px, #3a7bee);
  font-family: var(--mono);
  font-size: 8px;
  white-space: nowrap;
}
.tasks svg { width: 12px; height: 12px; }
.tasks .current { background: #1e4fb8; padding-left: 8px; }
.tray {
  display: flex;
  align-items: center;
  gap: 2px;
  width: 73px;
  background: linear-gradient(#35b5f2 0, #139ced 4px, #1290e6 100%);
}
.tray svg { width: 12px; height: 13px; }
.tray .expand { margin-left: -7px; margin-right: 2px; }
.tray time { margin-left: 4px; font-family: "Liberation Sans", sans-serif; font-size: 10px; }
```
